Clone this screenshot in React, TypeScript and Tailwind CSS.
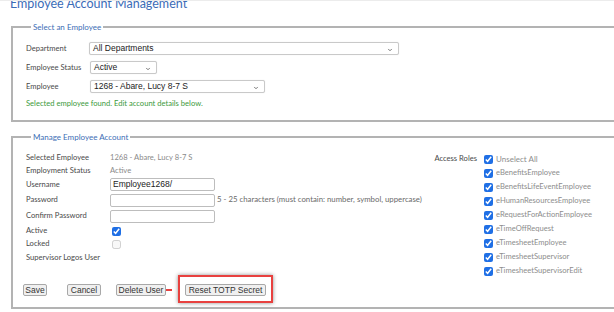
import { ChevronDown } from "lucide-react";

const roles = [
  "Unselect All",
  "eBenefitsEmployee",
  "eBenefitsLifeEventEmployee",
  "eHumanResourcesEmployee",
  "eRequestForActionEmployee",
  "eTimeOffRequest",
  "eTimesheetEmployee",
  "eTimesheetSupervisor",
  "eTimesheetSupervisorEdit",
];

function FakeSelect({ value, width }: { value: string; width: string }) {
  return (
    <div className={`relative h-[13px] ${width} border border-[#c9c9c9] rounded-[2px] bg-white shadow-[0_0_1px_rgba(0,0,0,0.15)] flex items-center pl-[3px] font-['Liberation_Sans',Arial,sans-serif] text-[8.5px] text-[#222]`}>
      {value}
      <ChevronDown className="absolute right-[5px] top-[3.5px] text-[#666]" size={6} strokeWidth={3.5} />
    </div>
  );
}

function TextBox({ value = "" }: { value?: string }) {
  return (
    <div className="h-[13px] w-[105px] border border-[#bdbdbd] rounded-[2px] bg-white flex items-center pl-[2px] font-['Liberation_Sans',Arial,sans-serif] text-[8.5px] text-[#222]">
      {value}
    </div>
  );
}

function Btn({ label, width }: { label: string; width: string }) {
  return (
    <button className={`h-[12px] ${width} bg-[#f0f0f0] border border-[#a8a8a8] rounded-[2px] font-['Liberation_Sans',Arial,sans-serif] text-[8.5px] leading-none text-[#333] flex items-center justify-center`}>
      {label}
    </button>
  );
}

export default function App() {
  return (
    <div className="w-[614px] h-[312px] overflow-hidden bg-white border-t border-[#ececec] font-['Lato','Open_Sans',sans-serif] text-[7.6px] text-[#4a4a4a]">
      {/* Header */}
      <h1 className="pl-[10px] -mt-[3px] text-[12.5px] leading-[12px] text-[#3b6cb7]">Employee Account Management</h1>

      {/* Select an Employee */}
      <fieldset className="ml-[11px] mt-[12px] w-[640px] border-2 border-[#b3b3b3] pl-[13px] pb-[12px]">
        <legend className="ml-[5px] px-[2px] text-[8px] leading-[10px] text-[#3d6eb5]">Select an Employee</legend>
        <div className="flex flex-col gap-[6px] pt-[10px]">
          <div className="flex items-center h-[13px]">
            <span className="w-[63px]">Department</span>
            <FakeSelect value="All Departments" width="w-[310px]" />
          </div>
          <div className="flex items-center h-[13px]">
            <span className="w-[64px]">Employee Status</span>
            <FakeSelect value="Active" width="w-[67px]" />
          </div>
          <div className="flex items-center h-[13px]">
            <span className="w-[64px]">Employee</span>
            <FakeSelect value="1268 - Abare, Lucy 8-7 S" width="w-[175px]" />
          </div>
        </div>
        <div className="mt-[5px] leading-[10px] text-[#3c9a3c]">Selected employee found. Edit account details below.</div>
      </fieldset>

      {/* Manage Employee Account */}
      <fieldset className="ml-[11px] mt-[10px] w-[640px] border-2 border-[#b3b3b3] pl-[13px] pb-[11px]">
        <legend className="ml-[5px] px-[2px] text-[8px] leading-[10px] text-[#3d6eb5]">Manage Employee Account</legend>
        <div className="flex pt-[10px]">
          <div className="w-[401px] flex flex-col">
            <div className="flex items-center h-[12px]">
              <span className="w-[84px]">Selected Employee</span>
              <span className="text-[#8a8a8a]">1268 - Abare, Lucy 8-7 S</span>
            </div>
            <div className="flex items-center h-[14px]">
              <span className="w-[84px]">Employment Status</span>
              <span className="text-[#8a8a8a]">Active</span>
            </div>
            <div className="flex items-center h-[13px]">
              <span className="w-[84px]">Username</span>
              <TextBox value="Employee1268/" />
            </div>
            <div className="flex items-center h-[18px]">
              <span className="w-[84px]">Password</span>
              <TextBox />
              <span className="ml-[2px] text-[7.8px] text-[#6a6a6a]">5 - 25 characters (must contain: number, symbol, uppercase)</span>
            </div>
            <div className="flex items-center h-[14px]">
              <span className="w-[84px]">Confirm Password</span>
              <TextBox />
            </div>
            <div className="flex items-center h-[16px]">
              <span className="w-[86px]">Active</span>
              <input type="checkbox" defaultChecked className="m-0 w-[9px] h-[9px] accent-[#1f6fe5]" />
            </div>
            <div className="flex items-center h-[10px]">
              <span className="w-[86px]">Locked</span>
              <input type="checkbox" disabled className="m-0 w-[9px] h-[9px]" />
            </div>
            <div className="flex items-center h-[18px]">
              <span>Supervisor Logos User</span>
            </div>
          </div>

          <div className="flex">
            <span className="w-[50px] h-[14px] flex items-center justify-end">Access Roles</span>
            <div className="ml-[7px] flex flex-col">
              {roles.map((r) => (
                <label key={r} className="h-[14px] flex items-center gap-[3px] text-[#8d8d8d]">
                  <input type="checkbox" defaultChecked className="m-0 w-[9px] h-[9px] accent-[#1f6fe5]" />
                  <span className={r === "Unselect All" ? "text-[8px]" : ""}>{r}</span>
                </label>
              ))}
            </div>
          </div>
        </div>

        <div className="flex items-center -ml-[3px] mt-[6px]">
          <Btn label="Save" width="w-[24px]" />
          <div className="ml-[20px]"><Btn label="Cancel" width="w-[34px]" /></div>
          <div className="ml-[15px] relative">
            <Btn label="Delete User" width="w-[50px]" />
            <div className="absolute left-[50px] top-[5px] w-[6px] h-[1.5px] bg-[#e8413f]" />
          </div>
          <div className="ml-[19px] relative">
            <Btn label="Reset TOTP Secret" width="w-[81px]" />
            <div className="absolute -left-[7px] -top-[9px] w-[95px] h-[28px] border-2 border-[#e8413f] shadow-[0_0_4px_rgba(0,0,0,0.45)]" />
          </div>
        </div>
      </fieldset>
    </div>
  );
}
